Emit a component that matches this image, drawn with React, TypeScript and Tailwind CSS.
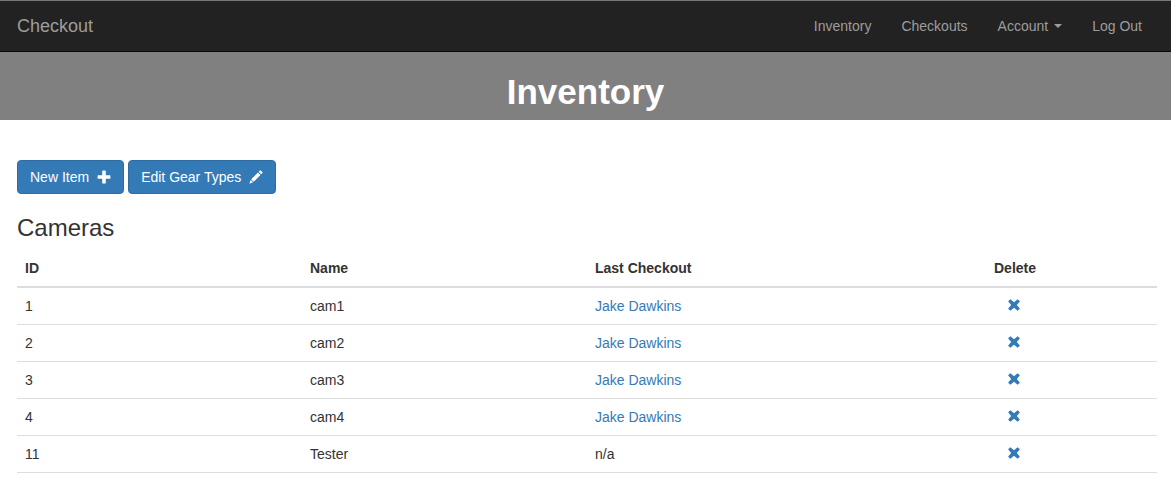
import type { ReactNode } from "react";

type Item = { id: number; name: string; lastCheckout?: string };

const cameras: Item[] = [
  { id: 1, name: "cam1", lastCheckout: "Jake Dawkins" },
  { id: 2, name: "cam2", lastCheckout: "Jake Dawkins" },
  { id: 3, name: "cam3", lastCheckout: "Jake Dawkins" },
  { id: 4, name: "cam4", lastCheckout: "Jake Dawkins" },
  { id: 11, name: "Tester" },
];

function PlusIcon() {
  return (
    <svg viewBox="0 0 14 14" className="size-3.5" fill="currentColor" aria-hidden="true">
      <path d="M5.6 .6h2.8q.4 0 .4.4v4.2H13q.4 0 .4.4v2.8q0 .4-.4.4H8.8V13q0 .4-.4.4H5.6q-.4 0-.4-.4V8.800H1q-.4 0-.4-.4V5.600q0-.4.4-.4h4.200V1q0-.4.4-.4z" />
    </svg>
  );
}

function PencilIcon() {
  return (
    <svg viewBox="0 0 14 14" className="size-3.5" fill="currentColor" aria-hidden="true">
      <path d="M11 .5q.4-.4.8 0l1.700 1.700q.4.400 0 .8l-1.300 1.300L9.700 1.800zM9 2.500 11.500 5 4.700 11.800 2.200 9.300zM1.700 9.900l2.400 2.400L.3 13.700z" />
    </svg>
  );
}

function RemoveIcon() {
  return (
    <svg viewBox="0 0 14 14" className="size-3.5" fill="currentColor" aria-hidden="true">
      <path d="M3.7 1.400 7 4.200l3.300-2.800q.3-.2.600 0l1.700 1.700q.2.300 0 .6L9.800 7l2.800 3.300q.2.300 0 .6l-1.700 1.700q-.3.200-.6 0L7 9.800l-3.300 2.800q-.3.200-.6 0l-1.700-1.700q-.2-.3 0-.6L4.200 7 1.400 3.700q-.2-.3 0-.6l1.700-1.700q.3-.2.600 0z" />
    </svg>
  );
}

function NavLink({ children }: { children: ReactNode }) {
  return (
    <a href="#" className="flex items-center px-[15px] py-[15px] text-[#9d9d9d] hover:text-white">
      {children}
    </a>
  );
}

function ActionButton({ children }: { children: ReactNode }) {
  return (
    <button
      type="button"
      className="flex items-center gap-2 rounded border border-[#2e6da4] bg-[#337ab7] px-3 py-1.5 text-white hover:bg-[#286090]"
    >
      {children}
    </button>
  );
}

export default function App() {
  return (
    <div className="min-h-screen bg-white font-['Helvetica_Neue',Helvetica,'Liberation_Sans',Arial,sans-serif] text-sm leading-5 text-[#333]">
      <nav className="flex items-center justify-between border-t border-b border-t-[#777] border-b-[#080808] bg-[#222] pr-[14px] pl-[17px]">
        <a href="#" className="text-lg leading-5 text-[#9d9d9d] hover:text-white">
          Checkout
        </a>
        <div className="flex">
          <NavLink>Inventory</NavLink>
          <NavLink>Checkouts</NavLink>
          <NavLink>
            Account
            <svg viewBox="0 0 8 4" className="ml-1.5 h-1 w-2" fill="currentColor" aria-hidden="true">
              <path d="M0 0h8L4 4z" />
            </svg>
          </NavLink>
          <NavLink>Log Out</NavLink>
        </div>
      </nav>

      <header className="bg-[#808080] pt-5 pb-2 text-center">
        <h1 className="text-[35px] leading-10 font-bold text-white">Inventory</h1>
      </header>

      <main className="pt-10 pr-[14px] pl-[17px]">
        <div className="flex gap-1">
          <ActionButton>
            New Item
            <PlusIcon />
          </ActionButton>
          <ActionButton>
            Edit Gear Types
            <PencilIcon />
          </ActionButton>
        </div>

        <h3 className="mt-5 mb-2 text-2xl leading-7 font-medium">Cameras</h3>

        <table className="w-full table-fixed border-collapse text-left">
          <thead>
            <tr className="border-b-2 border-[#ddd]">
              <th className="w-[25%] p-2 font-bold">ID</th>
              <th className="w-[25%] p-2 font-bold">Name</th>
              <th className="w-[35%] p-2 font-bold">Last Checkout</th>
              <th className="w-[15%] p-2 font-bold">Delete</th>
            </tr>
          </thead>
          <tbody>
            {cameras.map((item) => (
              <tr key={item.id} className="border-b border-[#ddd] align-top">
                <td className="p-2">{item.id}</td>
                <td className="p-2">{item.name}</td>
                <td className="p-2">
                  {item.lastCheckout ? (
                    <a href="#" className="text-[#337ab7] hover:underline">
                      {item.lastCheckout}
                    </a>
                  ) : (
                    "n/a"
                  )}
                </td>
                <td className="p-2">
                  <button
                    type="button"
                    aria-label={`Delete ${item.name}`}
                    className="flex h-[18px] w-10 items-center justify-center text-[#337ab7]"
                  >
                    <RemoveIcon />
                  </button>
                </td>
              </tr>
            ))}
          </tbody>
        </table>
      </main>
    </div>
  );
}
